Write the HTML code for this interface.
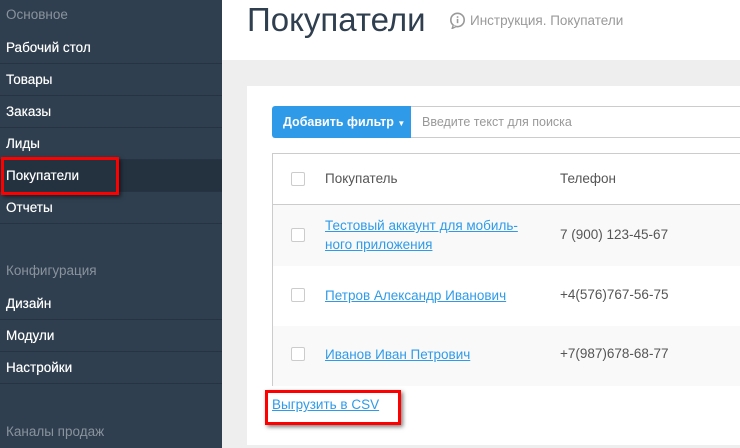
<!DOCTYPE html>
<html><head><meta charset="utf-8"><style>
*{margin:0;padding:0;box-sizing:border-box}
body{width:740px;height:448px;overflow:hidden;font-family:"Liberation Sans","DejaVu Sans",sans-serif;background:#eeeeee;position:relative}
.sb{position:absolute;left:0;top:0;width:222px;height:448px;background:#2f3f4f}
.sb .h{position:absolute;left:6px;color:#8a939c;font-size:13.5px}
.sb .i{position:absolute;left:0;width:222px;height:32px;color:#fff;font-size:13.5px;padding-left:6px;line-height:32px;border-bottom:1px solid #253342;text-shadow:0 0 .4px #fff}
.sb .i.a{background:#243240}
.top{position:absolute;left:222px;top:0;width:518px;height:60px;background:#fff}
.top h1{position:absolute;left:25px;top:1px;font-weight:normal;font-size:33px;color:#2f3f4f}
.top .ins{position:absolute;left:227px;top:12px;color:#999;font-size:13.5px}
.panel{position:absolute;left:247px;top:86px;width:500px;height:359px;background:#fff}
.btn{position:absolute;left:272px;top:106px;width:139px;height:32px;background:#2f9be8;border-radius:3px 0 0 3px;color:#fff;font-weight:bold;font-size:12.5px;line-height:32px;padding-left:11px}
.inp{position:absolute;left:411px;top:106px;width:340px;height:32px;border:1px solid #ccc;border-left:none;color:#999;font-size:12.5px;line-height:30px;padding-left:11px}
.tbl{position:absolute;left:272px;top:153px;width:480px;height:233px;border:1px solid #ccc}
.r{position:absolute;left:0;width:480px}
.cb{position:absolute;left:18px;width:14px;height:14px;border:1px solid #ccc;border-radius:2px;background:#fff}
.n{position:absolute;left:52px;color:#2f9be8;text-decoration:underline;font-size:13.5px;line-height:19px}
.p{position:absolute;left:287px;color:#555;font-size:13.5px}
.red{position:absolute;border:3px solid #f00;box-shadow:2px 2px 4px rgba(0,0,0,.5)}
</style></head><body>
<div class="sb">
<div class="h" style="top:7px">Основное</div>
<div class="i" style="top:32px">Рабочий стол</div>
<div class="i" style="top:64px">Товары</div>
<div class="i" style="top:96px">Заказы</div>
<div class="i" style="top:128px">Лиды</div>
<div class="i a" style="top:160px">Покупатели</div>
<div class="i" style="top:192px">Отчеты</div>
<div class="h" style="top:263px">Конфигурация</div>
<div class="i" style="top:288px">Дизайн</div>
<div class="i" style="top:320px">Модули</div>
<div class="i" style="top:352px">Настройки</div>
<div class="h" style="top:424px">Каналы продаж</div>
</div>
<div class="red" style="left:1px;top:157px;width:118px;height:38px"></div>
<div class="top"><h1>Покупатели</h1>
<div class="ins"><svg width="17" height="17" viewBox="0 0 16 16" style="vertical-align:-4px;margin-right:4px"><circle cx="8" cy="7.5" r="6.3" fill="none" stroke="#999" stroke-width="1.5"/><path d="M4 12.5 L3 15.5 L7 13.5" fill="#fff" stroke="#999" stroke-width="1.3"/><rect x="7.3" y="6.5" width="1.5" height="4" fill="#999"/><rect x="7.3" y="4" width="1.5" height="1.5" fill="#999"/></svg>Инструкция. Покупатели</div></div>
<div class="panel"></div>
<div class="btn">Добавить фильтр <span style="font-size:8px">▼</span></div>
<div class="inp">Введите текст для поиска</div>
<div class="tbl">
<div class="r" style="top:0;height:51px;border-bottom:1px solid #ccc"><div class="cb" style="top:18px"></div><div class="p" style="left:52px;top:17px">Покупатель</div><div class="p" style="top:17px">Телефон</div></div>
<div class="r" style="top:51px;height:61px;background:#f9f9f9"><div class="cb" style="top:23px"></div><div class="n" style="top:11px">Тестовый аккаунт для мобиль-<br>ного приложения</div><div class="p" style="top:22px">7 (900) 123-45-67</div></div>
<div class="r" style="top:112px;height:60px"><div class="cb" style="top:22px"></div><div class="n" style="top:20px">Петров Александр Иванович</div><div class="p" style="top:21px">+4(576)767-56-75</div></div>
<div class="r" style="top:172px;height:60px;background:#f9f9f9"><div class="cb" style="top:21px"></div><div class="n" style="top:19px">Иванов Иван Петрович</div><div class="p" style="top:20px">+7(987)678-68-77</div></div>
</div>
<div style="position:absolute;left:272px;top:397px;color:#2f9be8;text-decoration:underline;font-size:13.5px">Выгрузить в CSV</div>
<div class="red" style="left:265px;top:390px;width:136px;height:35px"></div>
</body></html>
